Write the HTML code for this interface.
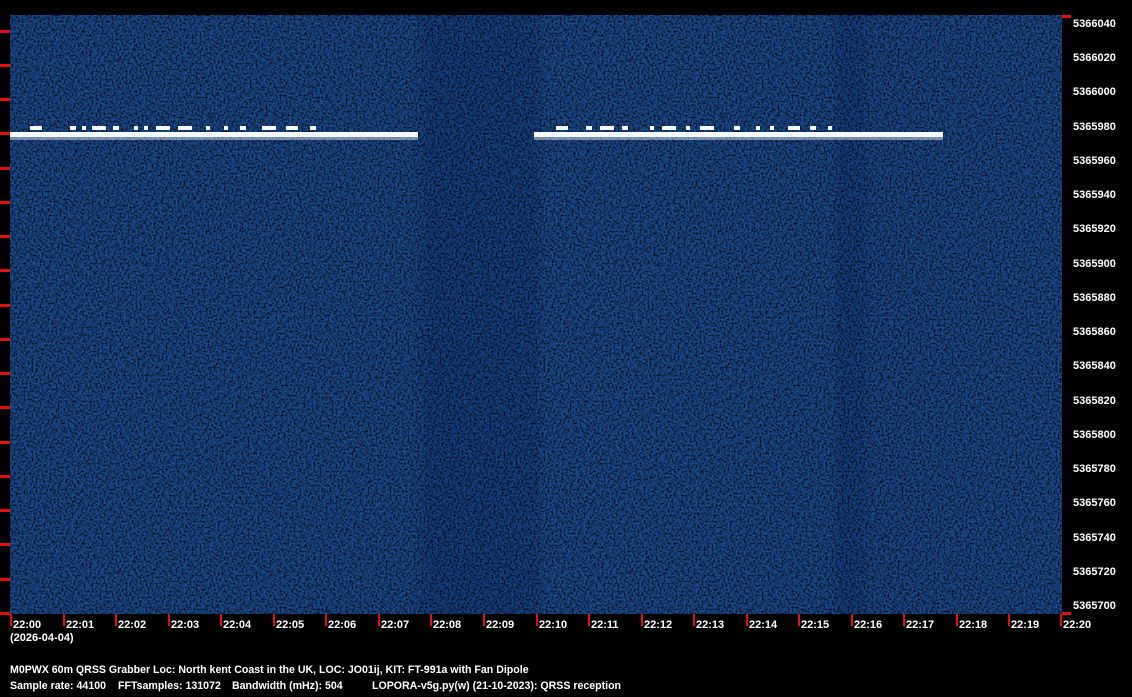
<!DOCTYPE html>
<html><head><meta charset="utf-8"><style>
body{margin:0;width:1132px;height:697px;background:#000;overflow:hidden;position:relative;font-family:"Liberation Sans",sans-serif;font-weight:bold;font-size:11px;color:#fff}
.a{position:absolute;white-space:pre;line-height:12px}
.b{font-size:10.6px}
.r{position:absolute;background:#e01010}
</style></head><body>
<svg style="position:absolute;left:10px;top:15px" width="1052" height="599">
<defs>
<filter id="n" x="0" y="0" width="100%" height="100%">
<feTurbulence type="fractalNoise" baseFrequency="0.5" numOctaves="2" seed="3" result="t"/>
<feColorMatrix in="t" type="matrix" values="0 0 0 0 0  0 0 0 0 0  0 0 0 0 0  2.2 0 0 0 -0.85"/>
<feComposite in2="SourceGraphic" operator="in"/>
</filter>
<linearGradient id="g" x1="0" x2="1" y1="0" y2="0">
<stop offset="0" stop-color="#1c4b90"/>
<stop offset="0.38" stop-color="#1b4a8e"/>
<stop offset="0.40" stop-color="#164084"/>
<stop offset="0.50" stop-color="#174286"/>
<stop offset="0.51" stop-color="#1c4b90"/>
<stop offset="0.78" stop-color="#1b4a8e"/>
<stop offset="0.79" stop-color="#164084"/>
<stop offset="0.81" stop-color="#174286"/>
<stop offset="0.82" stop-color="#1b488c"/>
<stop offset="1" stop-color="#1c4b90"/>
</linearGradient>
</defs>
<rect width="1052" height="599" fill="url(#g)"/>
<rect width="1052" height="599" fill="#6f9ede" filter="url(#n)"/>
<g fill="#f4f8ff">
<rect x="0" y="117" width="408" height="5"/>
<rect x="524" y="117" width="409" height="5"/>
<rect x="20" y="111" width="12" height="4"/><rect x="60" y="111" width="6" height="4"/><rect x="72" y="111" width="4" height="4"/><rect x="82" y="111" width="14" height="4"/><rect x="103" y="111" width="6" height="4"/><rect x="124" y="111" width="4" height="4"/><rect x="134" y="111" width="4" height="4"/><rect x="146" y="111" width="14" height="4"/><rect x="168" y="111" width="14" height="4"/><rect x="196" y="111" width="4" height="4"/><rect x="214" y="111" width="4" height="4"/><rect x="230" y="111" width="6" height="4"/><rect x="252" y="111" width="14" height="4"/><rect x="276" y="111" width="12" height="4"/><rect x="300" y="111" width="6" height="4"/>
<rect x="546" y="111" width="12" height="4"/><rect x="576" y="111" width="6" height="4"/><rect x="590" y="111" width="14" height="4"/><rect x="612" y="111" width="6" height="4"/><rect x="640" y="111" width="4" height="4"/><rect x="652" y="111" width="14" height="4"/><rect x="676" y="111" width="4" height="4"/><rect x="690" y="111" width="14" height="4"/><rect x="724" y="111" width="6" height="4"/><rect x="746" y="111" width="4" height="4"/><rect x="760" y="111" width="4" height="4"/><rect x="778" y="111" width="12" height="4"/><rect x="800" y="111" width="6" height="4"/><rect x="818" y="111" width="4" height="4"/>
<rect x="0" y="122" width="408" height="3" opacity=".45"/><rect x="524" y="122" width="409" height="3" opacity=".45"/>
</g>
</svg>
<div class="r" style="left:0;top:30px;width:10px;height:3px"></div><div class="r" style="left:0;top:64px;width:10px;height:3px"></div><div class="r" style="left:0;top:98px;width:10px;height:3px"></div><div class="r" style="left:0;top:132px;width:10px;height:3px"></div><div class="r" style="left:0;top:167px;width:10px;height:3px"></div><div class="r" style="left:0;top:201px;width:10px;height:3px"></div><div class="r" style="left:0;top:235px;width:10px;height:3px"></div><div class="r" style="left:0;top:269px;width:10px;height:3px"></div><div class="r" style="left:0;top:304px;width:10px;height:3px"></div><div class="r" style="left:0;top:338px;width:10px;height:3px"></div><div class="r" style="left:0;top:372px;width:10px;height:3px"></div><div class="r" style="left:0;top:406px;width:10px;height:3px"></div><div class="r" style="left:0;top:441px;width:10px;height:3px"></div><div class="r" style="left:0;top:475px;width:10px;height:3px"></div><div class="r" style="left:0;top:509px;width:10px;height:3px"></div><div class="r" style="left:0;top:543px;width:10px;height:3px"></div><div class="r" style="left:0;top:578px;width:10px;height:3px"></div><div class="r" style="left:0;top:612px;width:10px;height:3px"></div>
<div class="r" style="left:1062px;top:15px;width:9px;height:3px"></div><div class="r" style="left:1062px;top:612px;width:9px;height:3px"></div>
<div class="a" style="left:1073px;top:18px">5366040</div><div class="a" style="left:1073px;top:52px">5366020</div><div class="a" style="left:1073px;top:86px">5366000</div><div class="a" style="left:1073px;top:121px">5365980</div><div class="a" style="left:1073px;top:155px">5365960</div><div class="a" style="left:1073px;top:189px">5365940</div><div class="a" style="left:1073px;top:223px">5365920</div><div class="a" style="left:1073px;top:258px">5365900</div><div class="a" style="left:1073px;top:292px">5365880</div><div class="a" style="left:1073px;top:326px">5365860</div><div class="a" style="left:1073px;top:360px">5365840</div><div class="a" style="left:1073px;top:395px">5365820</div><div class="a" style="left:1073px;top:429px">5365800</div><div class="a" style="left:1073px;top:463px">5365780</div><div class="a" style="left:1073px;top:497px">5365760</div><div class="a" style="left:1073px;top:532px">5365740</div><div class="a" style="left:1073px;top:566px">5365720</div><div class="a" style="left:1073px;top:600px">5365700</div>
<div class="r" style="left:10px;top:614px;width:2px;height:12px"></div><div class="r" style="left:63px;top:614px;width:2px;height:12px"></div><div class="r" style="left:115px;top:614px;width:2px;height:12px"></div><div class="r" style="left:168px;top:614px;width:2px;height:12px"></div><div class="r" style="left:220px;top:614px;width:2px;height:12px"></div><div class="r" style="left:273px;top:614px;width:2px;height:12px"></div><div class="r" style="left:325px;top:614px;width:2px;height:12px"></div><div class="r" style="left:378px;top:614px;width:2px;height:12px"></div><div class="r" style="left:430px;top:614px;width:2px;height:12px"></div><div class="r" style="left:483px;top:614px;width:2px;height:12px"></div><div class="r" style="left:536px;top:614px;width:2px;height:12px"></div><div class="r" style="left:588px;top:614px;width:2px;height:12px"></div><div class="r" style="left:641px;top:614px;width:2px;height:12px"></div><div class="r" style="left:693px;top:614px;width:2px;height:12px"></div><div class="r" style="left:746px;top:614px;width:2px;height:12px"></div><div class="r" style="left:798px;top:614px;width:2px;height:12px"></div><div class="r" style="left:851px;top:614px;width:2px;height:12px"></div><div class="r" style="left:903px;top:614px;width:2px;height:12px"></div><div class="r" style="left:956px;top:614px;width:2px;height:12px"></div><div class="r" style="left:1008px;top:614px;width:2px;height:12px"></div><div class="r" style="left:1060px;top:614px;width:2px;height:12px"></div>
<div class="a" style="left:13px;top:619px">22:00</div><div class="a" style="left:66px;top:619px">22:01</div><div class="a" style="left:118px;top:619px">22:02</div><div class="a" style="left:171px;top:619px">22:03</div><div class="a" style="left:223px;top:619px">22:04</div><div class="a" style="left:276px;top:619px">22:05</div><div class="a" style="left:328px;top:619px">22:06</div><div class="a" style="left:381px;top:619px">22:07</div><div class="a" style="left:433px;top:619px">22:08</div><div class="a" style="left:486px;top:619px">22:09</div><div class="a" style="left:539px;top:619px">22:10</div><div class="a" style="left:591px;top:619px">22:11</div><div class="a" style="left:644px;top:619px">22:12</div><div class="a" style="left:696px;top:619px">22:13</div><div class="a" style="left:749px;top:619px">22:14</div><div class="a" style="left:801px;top:619px">22:15</div><div class="a" style="left:854px;top:619px">22:16</div><div class="a" style="left:906px;top:619px">22:17</div><div class="a" style="left:959px;top:619px">22:18</div><div class="a" style="left:1011px;top:619px">22:19</div><div class="a" style="left:1063px;top:619px">22:20</div>
<div class="a" style="left:10px;top:632px">(2026-04-04)</div>
<div class="a b" style="left:10px;top:664px">M0PWX 60m QRSS Grabber Loc: North kent Coast in the UK, LOC: JO01ij, KIT: FT-991a with Fan Dipole</div>
<div class="a b" style="left:10px;top:680px">Sample rate: 44100</div>
<div class="a b" style="left:118px;top:680px">FFTsamples: 131072</div>
<div class="a b" style="left:232px;top:680px">Bandwidth (mHz): 504</div>
<div class="a b" style="left:372px;top:680px">LOPORA-v5g.py(w) (21-10-2023): QRSS reception</div>
</body></html>
